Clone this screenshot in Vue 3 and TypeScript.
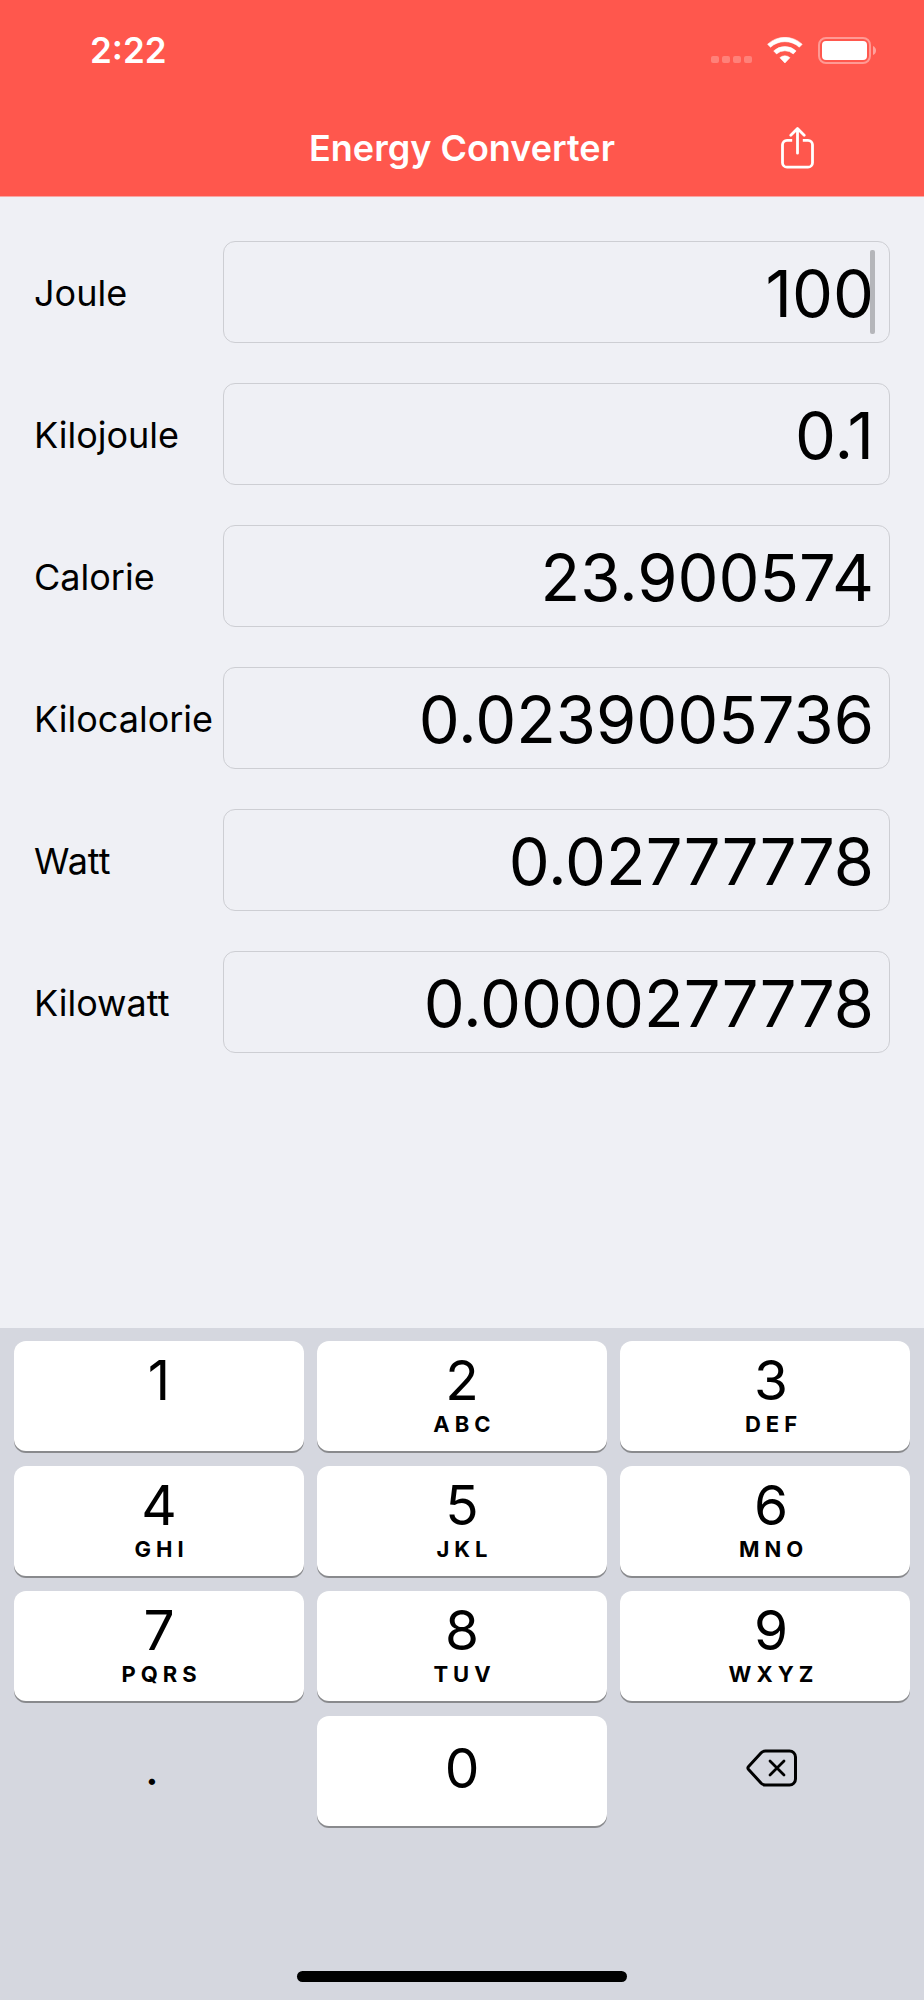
<script setup lang="ts">
import { computed, ref } from 'vue'

interface Unit {
  id: string
  label: string
  perJoule: number
  decimals: number
}

interface Key {
  value: string
  letters: string
}

const units: Unit[] = [
  { id: 'joule', label: 'Joule', perJoule: 1, decimals: 6 },
  { id: 'kilojoule', label: 'Kilojoule', perJoule: 0.001, decimals: 9 },
  { id: 'calorie', label: 'Calorie', perJoule: 0.23900573614, decimals: 6 },
  { id: 'kilocalorie', label: 'Kilocalorie', perJoule: 0.00023900573614, decimals: 10 },
  { id: 'watt', label: 'Watt', perJoule: 1 / 3600, decimals: 8 },
  { id: 'kilowatt', label: 'Kilowatt', perJoule: 1 / 3600000, decimals: 10 },
]

const keys: Key[] = [
  { value: '1', letters: '' },
  { value: '2', letters: 'ABC' },
  { value: '3', letters: 'DEF' },
  { value: '4', letters: 'GHI' },
  { value: '5', letters: 'JKL' },
  { value: '6', letters: 'MNO' },
  { value: '7', letters: 'PQRS' },
  { value: '8', letters: 'TUV' },
  { value: '9', letters: 'WXYZ' },
]

const activeId = ref('joule')
const entry = ref('100')

const joules = computed(() => {
  const active = units.find((u) => u.id === activeId.value) ?? units[0]
  return (Number(entry.value) || 0) / active.perJoule
})

function display(unit: Unit): string {
  if (unit.id === activeId.value) return entry.value
  const text = (joules.value * unit.perJoule).toFixed(unit.decimals)
  return text.replace(/\.?0+$/, '')
}

function activate(unit: Unit) {
  if (unit.id === activeId.value) return
  const shown = display(unit)
  activeId.value = unit.id
  entry.value = shown
}

function edit(event: Event) {
  entry.value = (event.target as HTMLInputElement).value
}

function press(value: string) {
  if (value === '.' && entry.value.includes('.')) return
  entry.value += value
}

function erase() {
  entry.value = entry.value.slice(0, -1)
}
</script>

<template>
  <div class="screen">
    <header class="header">
      <div class="status">
        <time class="clock">2:22</time>
        <div class="indicators">
          <svg width="41" height="27" viewBox="0 0 41 27" fill="#fff" fill-opacity="0.25" aria-hidden="true">
            <rect x="0" y="19" width="8" height="7" rx="2" />
            <rect x="11" y="19" width="8" height="7" rx="2" />
            <rect x="22" y="19" width="8" height="7" rx="2" />
            <rect x="33" y="19" width="8" height="7" rx="2" />
          </svg>
          <svg width="36" height="27" viewBox="0 0 36 27" fill="#fff" stroke="#fff" stroke-width="0.6" stroke-linejoin="round" aria-hidden="true">
            <path d="M.6 7.3A25 25 0 0 1 35.2 7.3L32.3 10.2A21.5 21.5 0 0 0 3.5 10.2Z" />
            <path d="M6.7 13.9A16.5 16.5 0 0 1 29.1 13.9L26.3 16.9A12.8 12.8 0 0 0 9.5 16.9Z" />
            <path d="M12.9 20.7A7.6 7.6 0 0 1 22.9 20.7L17.9 26Z" />
          </svg>
          <svg width="58" height="27" viewBox="0 0 58 27" aria-hidden="true">
            <rect x="1" y="1" width="51" height="25" rx="7" fill="none" stroke="#fff" stroke-opacity="0.4" stroke-width="2" />
            <rect x="4" y="4" width="45" height="19" rx="4" fill="#fff" />
            <path d="M55 9Q58 10.500 58 13.500T55 18Z" fill="#fff" fill-opacity="0.45" />
          </svg>
        </div>
      </div>
      <div class="navbar">
        <h1 class="title">Energy Converter</h1>
        <button class="share" type="button" aria-label="Share">
          <svg width="34" height="42" viewBox="0 0 34 42" fill="none" stroke="#fff" stroke-width="2.800" stroke-linejoin="round" aria-hidden="true">
            <path d="M11.200 13.300H6A4.500 4.500 0 0 0 1.500 17.800V35.700A4.500 4.500 0 0 0 6 40.200H27A4.500 4.500 0 0 0 31.500 35.700V17.800A4.500 4.500 0 0 0 27 13.300H21.800" />
            <path d="M16.500 2V26.200M9.800 8.200L16.500 1.500L23.200 8.200" stroke-linecap="round" />
          </svg>
        </button>
      </div>
    </header>

    <main class="units">
      <div v-for="unit in units" :key="unit.id" class="unit">
        <label class="unit-label" :for="unit.id">{{ unit.label }}</label>
        <div class="field">
          <input
            :id="unit.id"
            class="unit-input"
            type="text"
            inputmode="none"
            autocomplete="off"
            :value="display(unit)"
            @focus="activate(unit)"
            @input="edit"
          />
          <span v-if="unit.id === activeId" class="caret"></span>
        </div>
      </div>
    </main>

    <section class="keyboard" aria-label="Number pad">
      <div class="keys">
        <button v-for="key in keys" :key="key.value" class="key" type="button" @click="press(key.value)">
          <span class="digit">{{ key.value }}</span>
          <span class="letters">{{ key.letters }}</span>
        </button>
        <button class="key plain plain-left" type="button" @click="press('.')">
          <span class="digit">.</span>
        </button>
        <button class="key single" type="button" @click="press('0')">
          <span class="digit">0</span>
        </button>
        <button class="key plain plain-right" type="button" aria-label="Delete" @click="erase">
          <svg width="52" height="38" viewBox="0 0 52 38" fill="none" stroke="#000" stroke-width="3" stroke-linejoin="round" stroke-linecap="round" aria-hidden="true">
            <path d="M19.500 2H43.500A6 6 0 0 1 49.500 8V30A6 6 0 0 1 43.500 36H19.500Q17 36 15.200 34.200L2.600 20.600Q1.200 19 2.600 17.400L15.200 3.800Q17 2 19.500 2Z" />
            <path d="M24 12L38 26M38 12L24 26" stroke-width="2.800" />
          </svg>
        </button>
      </div>
      <div class="home-indicator"></div>
    </section>
  </div>
</template>

<style>
body {
  margin: 0;
  background: #eff0f5;
}
</style>

<style scoped>
.screen {
  display: flex;
  flex-direction: column;
  min-height: 100vh;
  box-sizing: border-box;
  background: #eff0f5;
  color: #000;
  font-family: Inter, "Liberation Sans", sans-serif;
}

.header {
  border-bottom: 1px solid #f9a5a2;
  background: #ff574d;
  color: #fff;
}

.status {
  display: flex;
  align-items: center;
  justify-content: space-between;
  height: 100px;
  padding: 0 48px 0 90px;
}

.clock {
  font-size: 35px;
  font-weight: 600;
  line-height: 44px;
}

.indicators {
  display: flex;
  align-items: center;
  gap: 15px;
}

.navbar {
  display: grid;
  grid-template-columns: 1fr auto 1fr;
  align-items: center;
  height: 96px;
}

.title {
  grid-column: 2;
  margin: 0;
  font-size: 36px;
  font-weight: 600;
  line-height: 44px;
}

.share {
  justify-self: end;
  display: flex;
  margin-right: 109px;
  padding: 0;
  border: 0;
  background: none;
}

.units {
  display: flex;
  flex-direction: column;
  gap: 40px;
  padding: 44px 34px;
}

.unit {
  display: grid;
  grid-template-columns: 189px 1fr;
  align-items: center;
}

.unit-label {
  padding-top: 2px;
  font-size: 36px;
  line-height: 44px;
}

.field {
  position: relative;
}

.unit-input {
  display: block;
  box-sizing: border-box;
  width: 100%;
  height: 102px;
  padding: 2px 15px 0;
  border: 1px solid #cdced3;
  border-radius: 12px;
  outline: none;
  background: transparent;
  color: #000;
  caret-color: transparent;
  font-family: inherit;
  font-size: 65px;
  text-align: right;
}

.caret {
  position: absolute;
  top: 9px;
  right: 15px;
  width: 5px;
  height: 84px;
  border-radius: 2px;
  background: #b5b6ba;
}

.keyboard {
  display: flex;
  flex-direction: column;
  justify-content: space-between;
  height: 672px;
  margin-top: auto;
  padding: 13px 14px 18px;
  box-sizing: border-box;
  background: #d5d7df;
}

.keys {
  display: grid;
  grid-template-columns: repeat(3, 1fr);
  grid-auto-rows: 110px;
  gap: 15px 13px;
}

.key {
  display: flex;
  flex-direction: column;
  align-items: center;
  padding: 9px 0 0;
  border: 0;
  border-radius: 12px;
  background: #fff;
  box-shadow: 0 2px 0 #898a8d;
  color: #000;
  font-family: inherit;
}

.key:nth-child(3n):not(.plain) {
  padding-left: 12px;
}

.digit {
  font-size: 55px;
  line-height: 60px;
}

.letters {
  margin-right: -5px;
  font-size: 22px;
  font-weight: 700;
  line-height: 28px;
  letter-spacing: 5px;
}

.single,
.plain {
  justify-content: center;
  padding: 0 0 6px;
}

.plain {
  background: none;
  box-shadow: none;
}

.plain-left {
  margin-left: -14px;
}

.plain-left .digit {
  font-size: 48px;
  line-height: 52px;
}

.plain-right {
  margin-right: -14px;
}

.home-indicator {
  align-self: center;
  width: 330px;
  height: 11px;
  border-radius: 6px;
  background: #000;
}
</style>
